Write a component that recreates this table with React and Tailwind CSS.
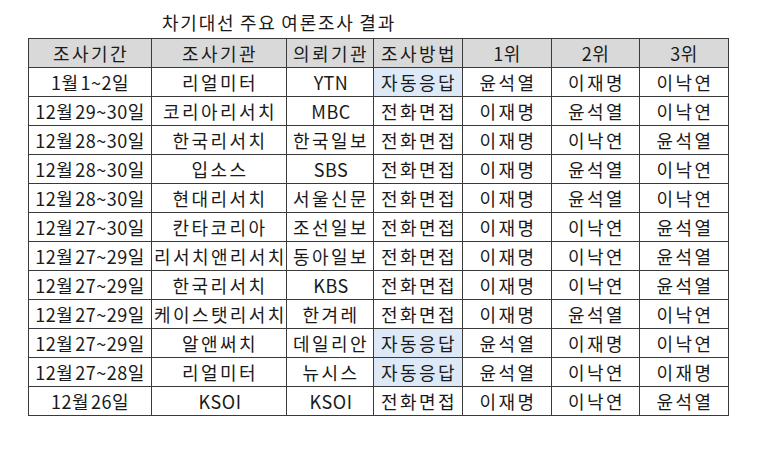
import React from 'react';

const cols = [123, 135, 87, 89, 89, 88, 89];
const headers = ['조사기간', '조사기관', '의뢰기관', '조사방법', '1위', '2위', '3위'];

const rows = [
  ['1월1~2일', '리얼미터', 'YTN', '자동응답', '윤석열', '이재명', '이낙연'],
  ['12월29~30일', '코리아리서치', 'MBC', '전화면접', '이재명', '윤석열', '이낙연'],
  ['12월28~30일', '한국리서치', '한국일보', '전화면접', '이재명', '이낙연', '윤석열'],
  ['12월28~30일', '입소스', 'SBS', '전화면접', '이재명', '윤석열', '이낙연'],
  ['12월28~30일', '현대리서치', '서울신문', '전화면접', '이재명', '윤석열', '이낙연'],
  ['12월27~30일', '칸타코리아', '조선일보', '전화면접', '이재명', '이낙연', '윤석열'],
  ['12월27~29일', '리서치앤리서치', '동아일보', '전화면접', '이재명', '이낙연', '윤석열'],
  ['12월27~29일', '한국리서치', 'KBS', '전화면접', '이재명', '이낙연', '윤석열'],
  ['12월27~29일', '케이스탯리서치', '한겨레', '전화면접', '이재명', '윤석열', '이낙연'],
  ['12월27~29일', '알앤써치', '데일리안', '자동응답', '윤석열', '이재명', '이낙연'],
  ['12월27~28일', '리얼미터', '뉴시스', '자동응답', '윤석열', '이낙연', '이재명'],
  ['12월26일', 'KSOI', 'KSOI', '전화면접', '이재명', '이낙연', '윤석열'],
];

// Hangul in the screenshot is set wider than Noto's, so space those runs out
const Txt = ({ s, wide = 'tracking-[2.4px]' }) =>
  s.split(/([가-힣]+)/).filter(Boolean).map((part, i) =>
    /[가-힣]/.test(part) ? (
      <span key={i} className={wide}>{part}</span>
    ) : (
      <span key={i} className="tracking-[0.5px]">{part}</span>
    )
  );

const App = () => {
  return (
    <div
      className="w-[780px] h-[457px] bg-white text-[#1a1a1a] pl-[28px] pt-[9px]"
      style={{ fontFamily: '"Noto Sans CJK KR", "Noto Sans", sans-serif' }}
    >
      <div className="ml-[134px] text-[18px] leading-[26px] h-[29px]">
        <Txt s="차기대선 주요 여론조사 결과" wide="tracking-[1.8px]" />
      </div>
      <table className="border-collapse table-fixed w-[701px] text-[18px] leading-none">
        <colgroup>
          {cols.map((w, i) => (
            <col key={i} style={{ width: w }} />
          ))}
        </colgroup>
        <thead>
          <tr className="h-[29px] bg-[#d9d9d9]">
            {headers.map((h) => (
              <th key={h} className="border border-[#3a3a3a] font-normal text-center p-0 pl-[2px] whitespace-nowrap">
                <Txt s={h} />
              </th>
            ))}
          </tr>
        </thead>
        <tbody>
          {rows.map((r, i) => (
            <tr key={i} className="h-[29px]">
              {r.map((c, j) => (
                <td
                  key={j}
                  className={`border border-[#3a3a3a] text-center p-0 pl-[2px] whitespace-nowrap ${
                    j === 3 && c === '자동응답' ? 'bg-[#dde9f6]' : ''
                  }`}
                >
                  <Txt s={c} />
                </td>
              ))}
            </tr>
          ))}
        </tbody>
      </table>
    </div>
  );
};

export default App;
